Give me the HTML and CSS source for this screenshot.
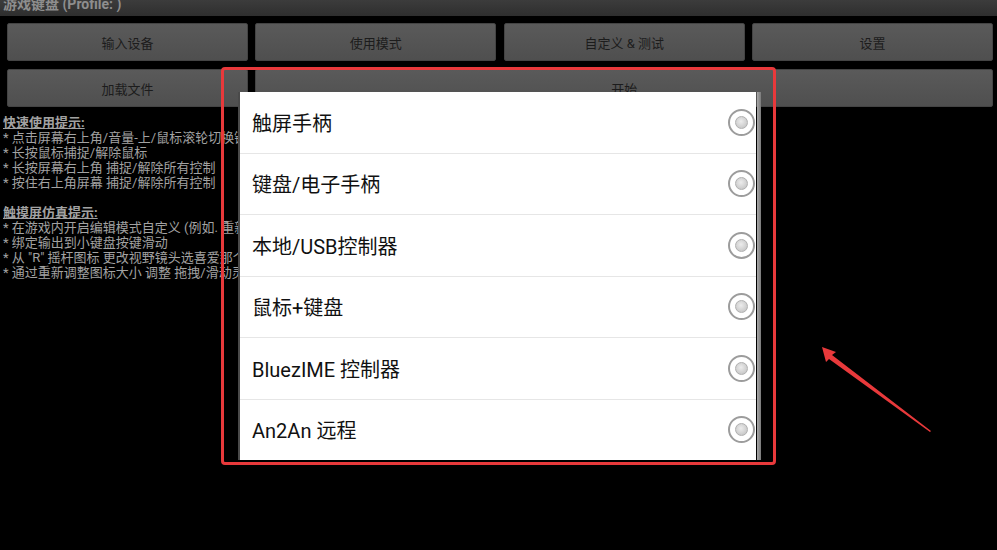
FILE: index.html
```html
<!DOCTYPE html>
<html lang="zh-CN">
  <head>
    <meta charset="UTF-8" />
    <link rel="stylesheet" href="styles.css">
    <title>游戏键盘</title>
  </head>
  <body>

  <div id="titlebar">
    <div class="title">游戏键盘 (Profile: )</div>
  </div>

  <div id="buttons">
    <div class="btn">输入设备</div>
    <div class="btn">使用模式</div>
    <div class="btn">自定义 &amp; 测试</div>
    <div class="btn">设置</div>
    <div class="btn">加载文件</div>
    <div class="btn wide">开始</div>
  </div>

  <div id="tips">
    <div class="head">快速使用提示:</div>
    <div>* 点击屏幕右上角/音量-上/鼠标滚轮切换键盘显示</div>
    <div>* 长按鼠标捕捉/解除鼠标</div>
    <div>* 长按屏幕右上角 捕捉/解除所有控制</div>
    <div>* 按住右上角屏幕 捕捉/解除所有控制</div>
    <div class="gap"></div>
    <div class="head">触摸屏仿真提示:</div>
    <div>* 在游戏内开启编辑模式自定义 (例如. 重新定位图标)</div>
    <div>* 绑定输出到小键盘按键滑动</div>
    <div>* 从 "R" 摇杆图标 更改视野镜头选喜爱那个</div>
    <div>* 通过重新调整图标大小 调整 拖拽/滑动灵敏度</div>
  </div>

  <!-- device picker, opened over the main screen -->
  <div id="picker">
    <div class="list">
      <div class="item"><span>触屏手柄</span><i class="radio"></i></div>
      <div class="item"><span>键盘/电子手柄</span><i class="radio"></i></div>
      <div class="item"><span>本地/USB控制器</span><i class="radio"></i></div>
      <div class="item"><span>鼠标+键盘</span><i class="radio"></i></div>
      <div class="item"><span>BluezIME 控制器</span><i class="radio"></i></div>
      <div class="item"><span>An2An 远程</span><i class="radio"></i></div>
    </div>
    <div class="scrollbar"></div>
  </div>

  <!-- annotation marks -->
  <div id="redframe"></div>
  <svg id="arrow" width="997" height="550" viewBox="0 0 997 550">
    <polygon points="822,347 836,352 832,355 931,431 930,432 829,359 826,362" fill="#e8393b"/>
  </svg>

</body>
</html>
```

FILE: styles.css
```css
*{
  box-sizing: border-box;
}
html, body {
  margin: 0;
  padding: 0;
}
body {
  background-color: black;
  width: 997px;
  height: 550px;
  overflow: hidden;
  position: relative;
  font-family: Roboto, "Noto Sans CJK SC", sans-serif;
}

#titlebar {
  height: 16px;
  overflow: hidden;
  background: linear-gradient(#3c3c3c, #2e2e2e);
}
#titlebar .title {
  margin-top: -5px;
  padding-left: 3px;
  line-height: 18px;
  font-size: 14px;
  font-weight: bold;
  color: #8e8e8e;
}

#buttons {
  display: grid;
  grid-template-columns: repeat(4, 1fr);
  gap: 8px 7.5px;
  padding: 7px 4px 0 7px;
}
.btn {
  height: 38px;
  display: flex;
  align-items: center;
  justify-content: center;
  background: linear-gradient(#5a5a5a, #4f4f4f);
  border: 1px solid #444;
  border-radius: 2px;
  color: #1c1c1c;
  font-size: 13px;
}
.btn.wide {
  grid-column: span 3;
}

#tips {
  padding: 8px 0 0 3px;
  font-size: 13px;
  line-height: 15px;
  color: #a2a2a2;
  white-space: nowrap;
}
#tips .head {
  font-weight: bold;
  text-decoration: underline;
}
#tips .gap {
  height: 15px;
}

#picker {
  position: absolute;
  left: 238px;
  top: 92px;
  width: 523px;
  height: 368px;
  display: flex;
  border-left: 2px solid #4a4a4a;
}
#picker .list {
  flex: 1;
  display: flex;
  flex-direction: column;
  background-color: white;
}
#picker .item {
  flex: 1;
  display: flex;
  align-items: center;
  justify-content: space-between;
  padding: 0 1px 0 12px;
  font-size: 20px;
  color: #111;
}
#picker .item:not(:last-child) {
  border-bottom: 1px solid #e6e6e6;
}
#picker .scrollbar {
  width: 4px;
  margin-left: 1px;
  background: linear-gradient(to right, #a8a8a8, #7a7a7a);
}

.radio {
  width: 27px;
  height: 27px;
  border: 2px solid #9c9c9c;
  border-radius: 50%;
  background: white;
  display: flex;
  align-items: center;
  justify-content: center;
}
.radio:after {
  content: "";
  width: 11px;
  height: 11px;
  border-radius: 50%;
  background: radial-gradient(circle at 45% 40%, #ececec, #bdbdbd);
  border: 1px solid #b0b0b0;
}

#redframe {
  position: absolute;
  left: 221px;
  top: 67px;
  width: 555px;
  height: 398px;
  border: 3.5px solid #e8393b;
  border-radius: 4px;
}
#arrow {
  position: absolute;
  left: 0;
  top: 0;
}
```
